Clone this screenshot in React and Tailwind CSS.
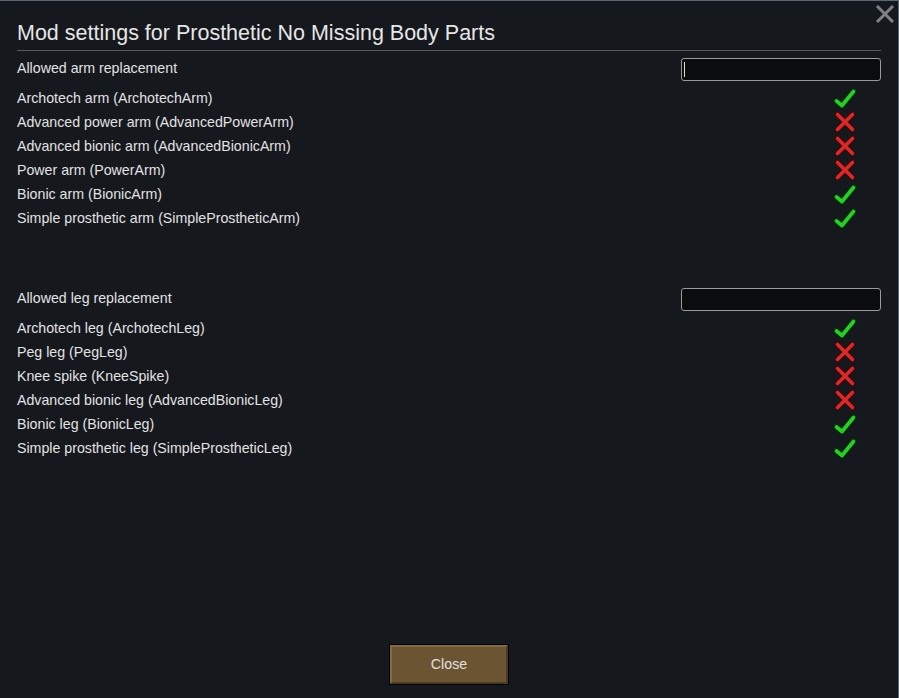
import React from 'react'

const arms = [
  { label: 'Archotech arm (ArchotechArm)', ok: true },
  { label: 'Advanced power arm (AdvancedPowerArm)', ok: false },
  { label: 'Advanced bionic arm (AdvancedBionicArm)', ok: false },
  { label: 'Power arm (PowerArm)', ok: false },
  { label: 'Bionic arm (BionicArm)', ok: true },
  { label: 'Simple prosthetic arm (SimpleProstheticArm)', ok: true }
]

const legs = [
  { label: 'Archotech leg (ArchotechLeg)', ok: true },
  { label: 'Peg leg (PegLeg)', ok: false },
  { label: 'Knee spike (KneeSpike)', ok: false },
  { label: 'Advanced bionic leg (AdvancedBionicLeg)', ok: false },
  { label: 'Bionic leg (BionicLeg)', ok: true },
  { label: 'Simple prosthetic leg (SimpleProstheticLeg)', ok: true }
]

const Check = () => (
  <svg width="24" height="24" viewBox="0 0 24 24">
    <path d="M3.5 15 L9 19.5 L20.5 5.5" fill="none" stroke="#0a300a" strokeWidth="6" strokeLinecap="round" strokeLinejoin="round" />
    <path d="M3.5 15 L9 19.5 L20.5 5.5" fill="none" stroke="#24d024" strokeWidth="3.6" strokeLinecap="round" strokeLinejoin="round" />
  </svg>
)

const Cross = () => (
  <svg width="24" height="24" viewBox="0 0 24 24">
    <path d="M4.5 4.5 L19.5 19.5 M19.5 4.5 L4.5 19.5" fill="none" stroke="#360a0a" strokeWidth="6" strokeLinecap="round" />
    <path d="M4.5 4.5 L19.5 19.5 M19.5 4.5 L4.5 19.5" fill="none" stroke="#dc2828" strokeWidth="3.6" strokeLinecap="round" />
  </svg>
)

const Section = ({ title, items, caret }) => (
  <div className="flex flex-col">
    <div className="flex items-center justify-between h-[24px]">
      <span>{title}</span>
      <div className="w-[200px] h-[23px] rounded-[3px] border border-[#9a9a9a] bg-[#0b0c0e] flex items-center px-[2px]">
        {caret && <div className="w-px h-[15px] bg-[#e0e0e0]" />}
      </div>
    </div>
    <div className="flex flex-col mt-[6px]">
      {items.map((item, i) => (
        <div key={i} className="flex items-center justify-between h-[24px]">
          <span>{item.label}</span>
          <div className="w-[24px] h-[24px] mr-[24px] -mt-[2px]">
            {item.ok ? <Check /> : <Cross />}
          </div>
        </div>
      ))}
    </div>
  </div>
)

export default function App() {
  return (
    <div
      className="w-[899px] h-[698px] bg-[#15181d] border-t border-r border-[#5d6673] text-[#e2e2e2] text-[14.2px] flex flex-col relative"
      style={{ fontFamily: '"Liberation Sans", Arial, sans-serif' }}
    >
      {/* Close X */}
      <svg className="absolute right-[3px] top-[4px]" width="20" height="18" viewBox="0 0 20 18">
        <path d="M2 1 L18 17 M18 1 L2 17" stroke="#7f8084" strokeWidth="3" />
      </svg>

      <div className="flex flex-col px-[17px] pt-[20px] flex-1">
        <h1 className="text-[21.5px] leading-[24px] text-[#e6e6e6]">Mod settings for Prosthetic No Missing Body Parts</h1>
        <div className="h-px bg-[#5a5a5a] mt-[5px]" />
        <div className="mt-[6px]">
          <Section title="Allowed arm replacement" items={arms} caret />
        </div>
        <div className="mt-[56px]">
          <Section title="Allowed leg replacement" items={legs} />
        </div>
      </div>

      <div className="flex justify-center pb-[13px]">
        <button className="w-[120px] h-[41px] bg-black p-px">
          <div className="w-full h-full bg-[#6b5431] border-[2px] border-t-[#86693d] border-l-[#86693d] border-b-[#4a3a20] border-r-[#4a3a20] flex items-center justify-center text-[14.2px] text-[#e0e0e0]">
            Close
          </div>
        </button>
      </div>
    </div>
  )
}
